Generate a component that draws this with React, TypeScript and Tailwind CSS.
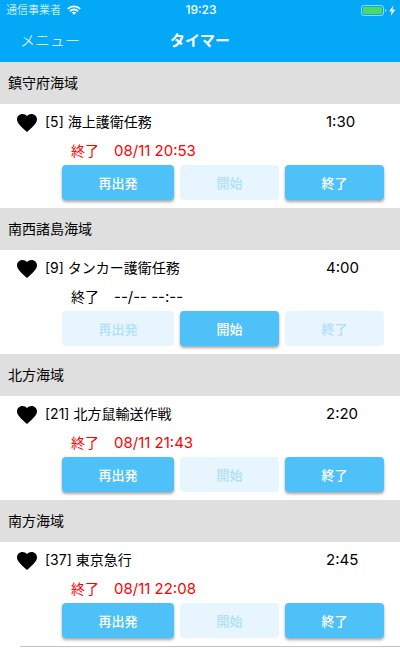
type Mission = {
  area: string;
  id: number;
  name: string;
  duration: string;
  end: string | null;
};

const missions: Mission[] = [
  { area: "鎮守府海域", id: 5, name: "海上護衛任務", duration: "1:30", end: "08/11 20:53" },
  { area: "南西諸島海域", id: 9, name: "タンカー護衛任務", duration: "4:00", end: null },
  { area: "北方海域", id: 21, name: "北方鼠輸送作戦", duration: "2:20", end: "08/11 21:43" },
  { area: "南方海域", id: 37, name: "東京急行", duration: "2:45", end: "08/11 22:08" },
];

function WifiIcon() {
  return (
    <svg width="14" height="10" viewBox="0 0 14 10" fill="none" stroke="white" strokeWidth="1.9" aria-hidden="true">
      <path d="M0.8 3.9a8.8 8.8 0 0 1 12.4 0" />
      <path d="M3 6.2a5.7 5.7 0 0 1 8 0" />
      <path d="M7 9.8 4.9 7.7a3 3 0 0 1 4.2 0Z" fill="white" stroke="none" />
    </svg>
  );
}

function BatteryIcon() {
  return (
    <svg width="35" height="11" viewBox="0 0 35 11" aria-hidden="true">
      <rect x="0.5" y="0.5" width="22" height="10" rx="2.2" fill="none" stroke="white" strokeOpacity="0.55" />
      <rect x="2" y="2" width="19" height="7" rx="0.8" fill="#4cd964" />
      <path d="M24 3.8q1.3.5 1.3 1.7T24 7.2Z" fill="white" fillOpacity="0.6" />
      <path d="M32.4 0.5 28.2 6.2h2.5L29.7 10.8 34.4 4.7h-2.9Z" fill="white" />
    </svg>
  );
}

function HeartIcon() {
  return (
    <svg width="20" height="18" viewBox="0 0 20 18" aria-hidden="true">
      <path
        d="M10 18 8.55 16.7C3.4 12.1 0 9.05 0 5.35 0 2.3 2.4 0 5.5 0 7.24 0 8.91.8 10 2.05 11.09.8 12.76 0 14.5 0 17.6 0 20 2.3 20 5.35c0 3.7-3.4 6.75-8.55 11.35Z"
        fill="black"
      />
    </svg>
  );
}

function ActionButton({ label, disabled }: { label: string; disabled: boolean }) {
  return (
    <button
      type="button"
      disabled={disabled}
      className="h-[35px] rounded bg-[#4fc1f9] text-[13px] leading-4 font-medium text-white shadow-[0_2px_3px_rgba(0,0,0,0.35)] disabled:bg-[#e7f6fe] disabled:text-[#aee0fa] disabled:shadow-none"
    >
      {label}
    </button>
  );
}

function MissionSection({ mission }: { mission: Mission }) {
  const running = mission.end !== null;
  return (
    <section>
      <h2 className="flex h-[42px] items-center bg-[#dfdfdf] px-2">{mission.area}</h2>
      <div className="pt-1 pr-4 pb-2">
        <div className="flex h-7 items-start pl-[17px]">
          <button type="button" aria-label="お気に入り" className="mr-2 shrink-0 pt-1.5">
            <HeartIcon />
          </button>
          <p className="grow pt-1">
            [{mission.id}] {mission.name}
          </p>
          <p className="w-[58px] pt-1 text-[15px]">{mission.duration}</p>
        </div>
        <p className={running ? "flex h-[29px] items-center pl-[71px] text-[#ff0000]" : "flex h-[29px] items-center pl-[71px]"}>
          <span className="w-[43px]">終了</span>
          <span className="text-[15px]">{mission.end ?? "--/-- --:--"}</span>
        </p>
        <div className="grid grid-cols-[112fr_99fr_99fr] gap-1.5 pl-[62px]">
          <ActionButton label="再出発" disabled={!running} />
          <ActionButton label="開始" disabled={running} />
          <ActionButton label="終了" disabled={!running} />
        </div>
      </div>
    </section>
  );
}

export default function App() {
  return (
    <div className="min-h-screen bg-white font-[Inter,'Noto_Sans_CJK_JP',sans-serif] text-[14px] leading-5 text-black">
      <header className="bg-[#03a8f7] text-white">
        <div className="grid h-5 grid-cols-[1fr_auto_1fr] items-center pr-1 pl-1.5">
          <div className="flex items-center gap-1.5 text-[11px]">
            <span className="font-light">通信事業者</span>
            <WifiIcon />
          </div>
          <time className="text-[12px] font-medium">19:23</time>
          <div className="justify-self-end">
            <BatteryIcon />
          </div>
        </div>
        <nav className="grid h-[42px] grid-cols-[1fr_auto_1fr] items-center text-[15px]">
          <button type="button" className="justify-self-start pl-5 font-light">メニュー</button>
          <h1 className="font-bold">タイマー</h1>
        </nav>
      </header>
      <main>
        {missions.map((mission) => (
          <MissionSection key={mission.id} mission={mission} />
        ))}
        <hr className="ml-5 border-[#c4c4c4]" />
      </main>
    </div>
  );
}
